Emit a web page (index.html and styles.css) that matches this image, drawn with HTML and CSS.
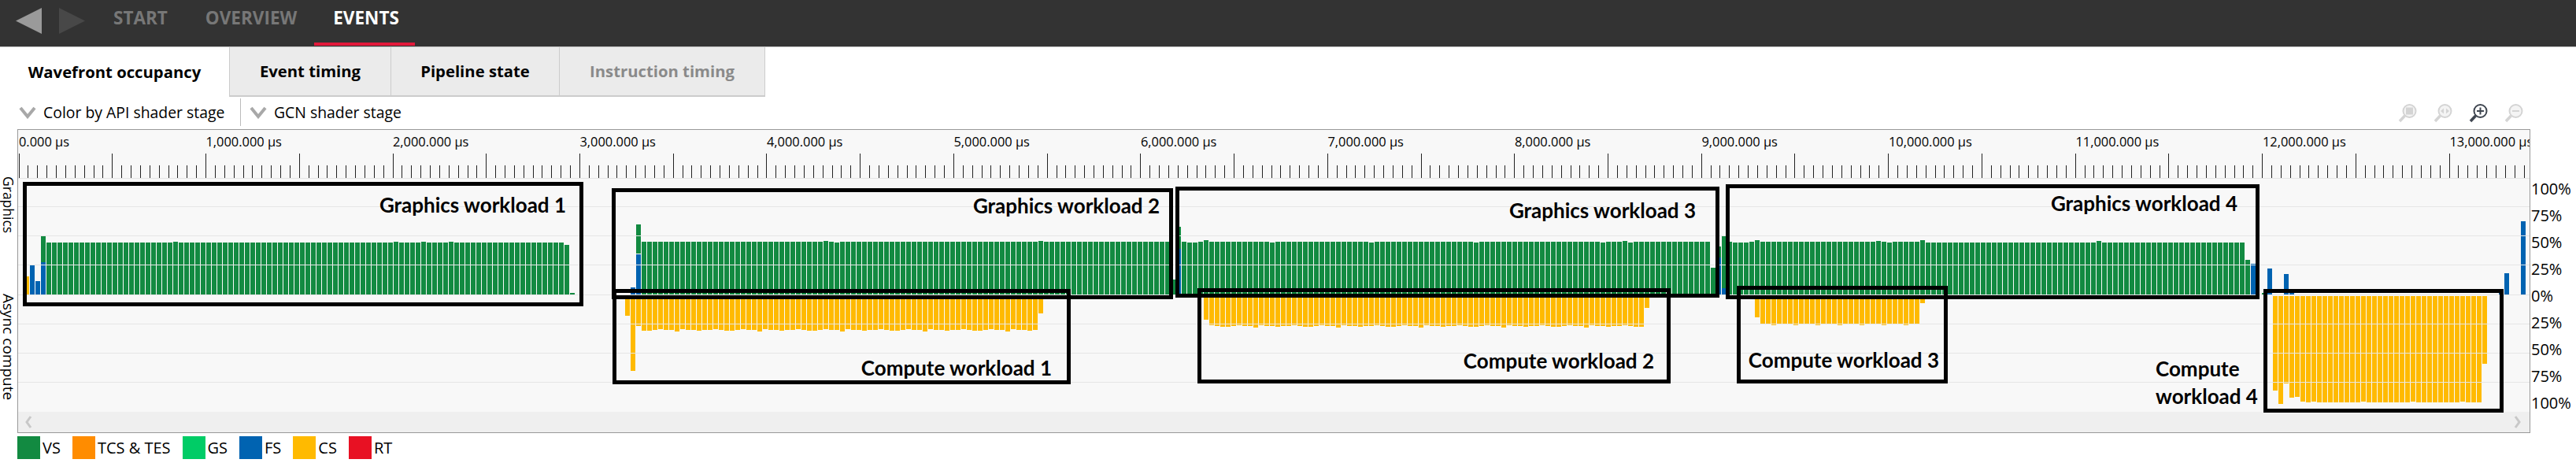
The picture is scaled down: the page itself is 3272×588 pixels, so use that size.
FILE: index.html
```html
<!DOCTYPE html>
<html lang="en">
<head>
    <meta charset="UTF-8">
    <title>Wavefront occupancy</title>
    <link rel="stylesheet" href="styles.css">
</head>
<body>
    <div class="top-bar">
        <div class="nav-arrows">
            <svg class="nav-arrow" viewBox="0 0 33 33"><polygon points="33,0 33,33 0,16.5" fill="#9a9a9a"/></svg>
            <svg class="nav-arrow" viewBox="0 0 33 33"><polygon points="0,0 0,33 33,16.5" fill="#484848"/></svg>
        </div>
        <a class="nav-link nav-start">START</a>
        <a class="nav-link nav-overview">OVERVIEW</a>
        <a class="nav-link nav-events">EVENTS</a>
    </div>

    <div class="tabs">
        <div class="tab tab-active">Wavefront occupancy</div>
        <div class="tab tab-event">Event timing</div>
        <div class="tab tab-pipeline">Pipeline state</div>
        <div class="tab tab-instruction">Instruction timing</div>
    </div>

    <div class="toolbar">
        <div class="combo combo-color">
            <svg class="chevron" viewBox="0 0 22 16"><polyline points="2,2 11,13 20,2" fill="none" stroke="#a8a8a8" stroke-width="4"/></svg>
            <span>Color by API shader stage</span>
        </div>
        <div class="combo">
            <svg class="chevron" viewBox="0 0 22 16"><polyline points="2,2 11,13 20,2" fill="none" stroke="#a8a8a8" stroke-width="4"/></svg>
            <span>GCN shader stage</span>
        </div>
        <div class="zoom-icons">
            <svg class="zoom-icon" viewBox="0 0 24 24">
                <circle cx="14.5" cy="9" r="8" fill="#f4f4f4" stroke="#d4d4d4" stroke-width="2"/>
                <rect x="10" y="4.5" width="9" height="9" fill="#d4d4d4"/>
                <line x1="8.5" y1="15" x2="2" y2="22" stroke="#d4d4d4" stroke-width="3.5"/>
            </svg>
            <svg class="zoom-icon" viewBox="0 0 24 24">
                <circle cx="14.5" cy="9" r="8" fill="#f4f4f4" stroke="#d4d4d4" stroke-width="2"/>
                <polygon points="9,9 13,5.5 13,12.5" fill="#d4d4d4"/>
                <polygon points="20,9 16,5.5 16,12.5" fill="#d4d4d4"/>
                <line x1="8.5" y1="15" x2="2" y2="22" stroke="#d4d4d4" stroke-width="3.5"/>
            </svg>
            <svg class="zoom-icon" viewBox="0 0 24 24">
                <circle cx="14.5" cy="9" r="8" fill="#fff" stroke="#3f4650" stroke-width="2"/>
                <path d="M14.5 4.5v9M10 9h9" stroke="#3f4650" stroke-width="2"/>
                <line x1="8.5" y1="15" x2="2" y2="22" stroke="#3f4650" stroke-width="3.5"/>
            </svg>
            <svg class="zoom-icon" viewBox="0 0 24 24">
                <circle cx="14.5" cy="9" r="8" fill="#f4f4f4" stroke="#d4d4d4" stroke-width="2"/>
                <path d="M10 9h9" stroke="#d4d4d4" stroke-width="2"/>
                <line x1="8.5" y1="15" x2="2" y2="22" stroke="#d4d4d4" stroke-width="3.5"/>
            </svg>
        </div>
    </div>

    <div class="chart-row">
        <div class="side-labels">
            <div class="side-label side-graphics">Graphics</div>
            <div class="side-label side-async">Async compute</div>
        </div>

        <div class="chart">
            <div class="ruler-labels">
                <span class="ruler-label">0.000 µs</span>
                <span class="ruler-label">1,000.000 µs</span>
                <span class="ruler-label">2,000.000 µs</span>
                <span class="ruler-label">3,000.000 µs</span>
                <span class="ruler-label">4,000.000 µs</span>
                <span class="ruler-label">5,000.000 µs</span>
                <span class="ruler-label">6,000.000 µs</span>
                <span class="ruler-label">7,000.000 µs</span>
                <span class="ruler-label">8,000.000 µs</span>
                <span class="ruler-label">9,000.000 µs</span>
                <span class="ruler-label">10,000.000 µs</span>
                <span class="ruler-label">11,000.000 µs</span>
                <span class="ruler-label">12,000.000 µs</span>
                <span class="ruler-label">13,000.000 µs</span>
            </div>
            <svg id="ticks" class="ticks"></svg>
            <svg id="plot" class="plot"></svg>
            <div class="scrollbar">
                <svg class="scroll-arrow" viewBox="0 0 10 16"><polyline points="8,1 3,8 8,15" fill="none" stroke="#c8c8c8" stroke-width="3"/></svg>
                <svg class="scroll-arrow" viewBox="0 0 10 16"><polyline points="2,1 7,8 2,15" fill="none" stroke="#c8c8c8" stroke-width="3"/></svg>
            </div>

            <!-- hand drawn annotation boxes on top of the chart -->
            <div class="workload wl-g1"><span class="wl-text">Graphics workload 1</span></div>
            <div class="workload wl-g2"><span class="wl-text">Graphics workload 2</span></div>
            <div class="workload wl-c1"><span class="wl-text">Compute workload 1</span></div>
            <div class="workload wl-g3"><span class="wl-text">Graphics workload 3</span></div>
            <div class="workload wl-c2"><span class="wl-text">Compute workload 2</span></div>
            <div class="workload wl-g4"><span class="wl-text">Graphics workload 4</span></div>
            <div class="workload wl-c3"><span class="wl-text">Compute workload 3</span></div>
            <div class="workload wl-c4"></div>
            <div class="wl-text wl-c4-text">Compute<br>workload 4</div>
        </div>

        <div class="y-axis">
            <span>100%</span>
            <span>75%</span>
            <span>50%</span>
            <span>25%</span>
            <span>0%</span>
            <span>25%</span>
            <span>50%</span>
            <span>75%</span>
            <span>100%</span>
        </div>
    </div>

    <div class="legend">
        <div class="legend-item"><i class="swatch swatch-vs"></i>VS</div>
        <div class="legend-item"><i class="swatch swatch-tcs"></i>TCS &amp; TES</div>
        <div class="legend-item"><i class="swatch swatch-gs"></i>GS</div>
        <div class="legend-item"><i class="swatch swatch-fs"></i>FS</div>
        <div class="legend-item"><i class="swatch swatch-cs"></i>CS</div>
        <div class="legend-item"><i class="swatch swatch-rt"></i>RT</div>
    </div>

    <script src="chart.js"></script>
</body>
</html>
```

FILE: styles.css
```css
* {
    box-sizing: border-box;
}
body {
    font-family: "Open Sans", "Noto Sans", sans-serif;
    margin: 0;
    width: 3272px;
    height: 588px;
    overflow: hidden;
    background-color: #fff;
    color: #000;
}

/* top navigation */
.top-bar {
    display: flex;
    height: 60px;
    background-color: #333;
    border-bottom: 1px solid #c4c4c4;
    position: relative;
}
.nav-arrows {
    display: flex;
    gap: 22px;
    padding: 10px 0 0 20px;
    width: 126px;
}
.nav-arrow {
    width: 33px;
    height: 33px;
}
.nav-link {
    font-size: 22.5px;
    font-weight: 700;
    line-height: 24px;
    margin-top: 11px;
    color: #777;
}
.nav-start {
    margin-left: 18px;
}
.nav-overview {
    margin-left: 48px;
}
.nav-events {
    margin-left: 46px;
    color: #fff;
}
.nav-events::after {
    content: "";
    position: absolute;
    left: 399px;
    top: 54px;
    width: 128px;
    height: 4px;
    background-color: #e3193b;
}

/* tabs */
.tabs {
    display: flex;
    height: 63px;
}
.tab {
    display: flex;
    align-items: center;
    justify-content: center;
    font-size: 20.3px;
    font-weight: 700;
    background-color: #ebebeb;
    border-right: 1px solid #ccc;
    border-bottom: 2px solid #ccc;
    padding-bottom: 2px;
}
.tab-active {
    width: 292px;
    background-color: #fff;
    border-right: 1px solid #ccc;
    border-bottom: none;
}
.tab-event {
    width: 205px;
}
.tab-pipeline {
    width: 214px;
}
.tab-instruction {
    width: 261px;
    color: #8a8a8a;
}

/* combo boxes and zoom buttons */
.toolbar {
    display: flex;
    align-items: center;
    height: 41px;
    padding-left: 24px;
}
.combo {
    display: flex;
    align-items: center;
    gap: 9px;
    font-size: 19.4px;
    height: 35px;
    margin-top: -2px;
}
.combo-color {
    width: 282px;
    border-right: 1px solid #bbb;
    margin-right: 11px;
}
.chevron {
    width: 22px;
    height: 16px;
}
.zoom-icons {
    display: flex;
    gap: 21px;
    margin-left: auto;
    margin-right: 67px;
}
.zoom-icon {
    width: 24px;
    height: 24px;
}

/* chart */
.chart-row {
    display: flex;
    height: 386px;
}
.side-labels {
    width: 22px;
    padding-top: 60px;
}
.side-label {
    writing-mode: vertical-rl;
    font-size: 17.5px;
    line-height: 22px;
    white-space: nowrap;
}
.side-graphics {
    height: 149px;
}
.side-async {
    font-size: 19px;
}
.chart {
    position: relative;
    display: flex;
    flex-direction: column;
    width: 3192px;
    height: 386px;
    background-color: #f8f8f8;
    border: 1px solid #999;
}
.ruler-labels {
    display: flex;
    height: 30px;
    overflow: hidden;
    padding-left: 1px;
    padding-top: 3px;
    font-size: 16.4px;
    line-height: 24px;
    white-space: nowrap;
}
.ruler-label {
    flex: 0 0 237.5px;
}
.ticks {
    display: block;
    width: 100%;
    height: 32px;
}
.plot {
    display: block;
    width: 100%;
    height: 296px;
}
.scrollbar {
    display: flex;
    align-items: center;
    justify-content: space-between;
    height: 26px;
    padding: 0 10px 0 8px;
    background-color: #efefef;
}
.scroll-arrow {
    width: 10px;
    height: 16px;
}

/* annotation boxes */
.workload {
    position: absolute;
    border: 5px solid #000;
}
.wl-text {
    position: absolute;
    font-family: Lato, "Open Sans", sans-serif;
    font-size: 26px;
    font-weight: 700;
    line-height: 30px;
    white-space: nowrap;
}
.wl-g1 { left: 6px; top: 66px; width: 712px; height: 158px; }
.wl-g1 .wl-text { right: 17px; top: 9px; }
.wl-g2 { left: 754px; top: 74px; width: 713px; height: 141px; }
.wl-g2 .wl-text { right: 12px; top: 2px; }
.wl-c1 { left: 755px; top: 202px; width: 582px; height: 121px; }
.wl-c1 .wl-text { right: 19px; top: 80px; }
.wl-g3 { left: 1470px; top: 72px; width: 691px; height: 141px; }
.wl-g3 .wl-text { right: 25px; top: 10px; }
.wl-c2 { left: 1498px; top: 201px; width: 601px; height: 121px; }
.wl-c2 .wl-text { right: 16px; top: 72px; }
.wl-g4 { left: 2169px; top: 69px; width: 678px; height: 146px; }
.wl-g4 .wl-text { right: 23px; top: 4px; }
.wl-c3 { left: 2183px; top: 198px; width: 268px; height: 124px; }
.wl-c3 .wl-text { right: 6px; top: 74px; }
.wl-c4 { left: 2852px; top: 202px; width: 305px; height: 157px; }
.wl-c4-text { left: 2715px; top: 286px; line-height: 35px; }

.y-axis {
    display: flex;
    flex-direction: column;
    padding-top: 59px;
    padding-left: 1px;
    font-size: 20px;
    line-height: 34px;
}

/* legend */
.legend {
    display: flex;
    gap: 15px;
    padding: 4px 0 0 22px;
}
.legend-item {
    display: flex;
    align-items: center;
    gap: 3px;
    font-size: 20px;
    height: 29px;
}
.swatch {
    display: block;
    width: 29px;
    height: 29px;
}
.swatch-vs { background-color: #128a41; }
.swatch-tcs { background-color: #ff8c00; }
.swatch-gs { background-color: #00cc66; }
.swatch-fs { background-color: #0063b1; }
.swatch-cs { background-color: #ffba00; }
.swatch-rt { background-color: #e81123; }
```

FILE: chart.js
```js
const SVG_NS = "http://www.w3.org/2000/svg";
const GREEN = "#128a41";
const BLUE = "#0063b1";
const YELLOW = "#ffba00";

// svg coordinates start at the inside of the chart frame
const FRAME_X = 23;
const PLOT_Y = 227;
const BIN = 7;
const ZERO_Y = 374;

function addRect(svg, x, y, w, h, fill) {
    const r = document.createElementNS(SVG_NS, "rect");
    r.setAttribute("x", x);
    r.setAttribute("y", y);
    r.setAttribute("width", w);
    r.setAttribute("height", h);
    r.setAttribute("fill", fill);
    r.setAttribute("shape-rendering", "crispEdges");
    svg.appendChild(r);
}

function binX(i) {
    return 38 + i * BIN - FRAME_X;
}

// upward bar, top given in page pixels
function upBar(svg, i, top, fill) {
    addRect(svg, binX(i), top - PLOT_Y, BIN - 1, ZERO_Y - top, fill);
}

// downward bar, bottom given in page pixels
function downBar(svg, i, bottom) {
    addRect(svg, binX(i), 376 - PLOT_Y, BIN - 1, bottom - 376, YELLOW);
}

function drawTicks() {
    const svg = document.getElementById("ticks");
    for (let k = 0; k <= 268; k++) {
        const x = Math.round(0.6 + k * 11.873);
        const long = k % 10 === 0;
        addRect(svg, x, long ? 0 : 15, 1, long ? 31 : 16, "#222");
    }
    addRect(svg, 0, 31, 3192, 1, "#e6e6e6");
}

function drawBars() {
    const svg = document.getElementById("plot");

    // small bumps on the green runs: bin -> top
    const greenBumps = {26: 307, 66: 307, 71: 307, 76: 307, 144: 306, 146: 308, 183: 306, 184: 307,
        209: 307, 210: 308, 211: 308, 213: 305, 225: 308, 243: 308, 262: 308, 285: 308, 289: 306,
        290: 308, 313: 305, 335: 306, 336: 307, 337: 308, 343: 305, 375: 306};

    const gTop = i => {
        if (greenBumps[i]) return greenBumps[i];
        return (i < 108 || i >= 344 || (i > 308 && i < 312)) ? 308 : 307;
    };

    // workload 1
    upBar(svg, -1, 351, YELLOW);
    upBar(svg, 0, 337, BLUE);
    upBar(svg, 1, 357, BLUE);
    upBar(svg, 2, 300, GREEN);
    upBar(svg, 2, 333, BLUE);
    for (let i = 3; i <= 96; i++) upBar(svg, i, gTop(i), GREEN);
    upBar(svg, 97, 311, GREEN);
    upBar(svg, 98, 372, GREEN);

    // workload 2
    upBar(svg, 109, 365, BLUE);
    upBar(svg, 110, 285, GREEN);
    addRect(svg, binX(110), 322 - PLOT_Y, 6, 1, "#f8f8f8");
    upBar(svg, 110, 323, BLUE);
    for (let i = 111; i <= 206; i++) upBar(svg, i, gTop(i), GREEN);
    upBar(svg, 207, 355, GREEN);

    // workload 3
    upBar(svg, 208, 288, GREEN);
    upBar(svg, 208, 316, BLUE);
    for (let i = 209; i <= 304; i++) upBar(svg, i, gTop(i), GREEN);
    upBar(svg, 305, 340, GREEN);
    upBar(svg, 306, 313, GREEN);
    upBar(svg, 306, 327, BLUE);
    upBar(svg, 307, 300, GREEN);
    upBar(svg, 307, 366, BLUE);

    // workload 4
    for (let i = 308; i <= 401; i++) upBar(svg, i, gTop(i), GREEN);
    upBar(svg, 402, 330, GREEN);
    upBar(svg, 403, 335, BLUE);
    upBar(svg, 405, 372, GREEN);
    upBar(svg, 406, 341, BLUE);
    upBar(svg, 409, 348, BLUE);
    upBar(svg, 410, 371, BLUE);
    upBar(svg, 448, 371, BLUE);
    upBar(svg, 449, 347, BLUE);
    upBar(svg, 452, 281, BLUE);

    // async compute
    const wobble = [0, 1, 0, 0, -1, 0, 1, 1, 0, -1, 0, 0, 2, -1, 0];
    downBar(svg, 108, 401);
    downBar(svg, 109, 471);
    downBar(svg, 110, 414);
    for (let i = 111; i <= 182; i++) downBar(svg, i, 419 + wobble[i % 15]);
    downBar(svg, 183, 398);

    downBar(svg, 213, 406);
    for (let i = 214; i <= 292; i++) downBar(svg, i, 414 + wobble[i % 15]);
    downBar(svg, 293, 391);

    downBar(svg, 313, 403);
    for (let i = 314; i <= 342; i++) downBar(svg, i, 412 + (i % 4 === 0 ? 1 : 0));
    downBar(svg, 343, 385);

    const c4Start = [496, 513, 487, 505, 504, 510];
    for (let i = 407; i <= 444; i++) {
        downBar(svg, i, i - 407 < c4Start.length ? c4Start[i - 407] : (i % 9 === 0 ? 510 : 511));
    }
    downBar(svg, 445, 462);

    // grid lines sit on top of the bars
    [262, 299, 336, 374, 411, 448, 485].forEach(y => {
        addRect(svg, 0, y - PLOT_Y, 3192, 1, "#e6e6e6");
    });
}

drawTicks();
drawBars();
```
